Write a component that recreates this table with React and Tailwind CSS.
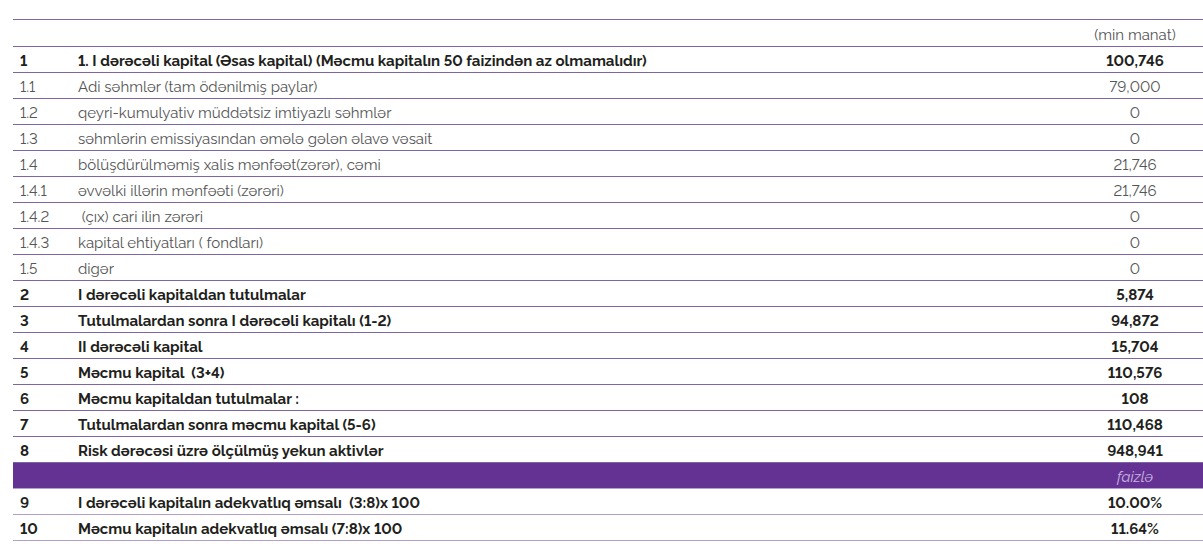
export default function App() {
  const rows = [
    { n: "1", t: "1. I dərəcəli kapital (Əsas kapital) (Məcmu kapitalın 50 faizindən az olmamalıdır)", v: "100,746", b: true },
    { n: "1.1", t: "Adi səhmlər (tam ödənilmiş paylar)", v: "79,000" },
    { n: "1.2", t: "qeyri-kumulyativ müddətsiz imtiyazlı səhmlər", v: "0" },
    { n: "1.3", t: "səhmlərin emissiyasından əmələ gələn əlavə vəsait", v: "0" },
    { n: "1.4", t: "bölüşdürülməmiş xalis mənfəət(zərər), cəmi", v: "21,746" },
    { n: "1.4.1", t: "əvvəlki illərin mənfəəti (zərəri)", v: "21,746" },
    { n: "1.4.2", t: "\u00a0(çıx) cari ilin zərəri", v: "0" },
    { n: "1.4.3", t: "kapital ehtiyatları ( fondları)", v: "0" },
    { n: "1.5", t: "digər", v: "0" },
    { n: "2", t: "I dərəcəli kapitaldan tutulmalar", v: "5,874", b: true },
    { n: "3", t: "Tutulmalardan sonra I dərəcəli kapitalı (1-2)", v: "94,872", b: true },
    { n: "4", t: "II dərəcəli kapital", v: "15,704", b: true },
    { n: "5", t: "Məcmu kapital  (3+4)", v: "110,576", b: true },
    { n: "6", t: "Məcmu kapitaldan tutulmalar :", v: "108", b: true },
    { n: "7", t: "Tutulmalardan sonra məcmu kapital (5-6)", v: "110,468", b: true },
    { n: "8", t: "Risk dərəcəsi üzrə ölçülmüş yekun aktivlər", v: "948,941", b: true },
  ];
  const tail = [
    { n: "9", t: "I dərəcəli kapitalın adekvatlıq əmsalı  (3:8)x 100", v: "10.00%", b: true },
    { n: "10", t: "Məcmu kapitalın adekvatlıq əmsalı (7:8)x 100", v: "11.64%", b: true },
  ];
  const Row = ({ r, light }) => (
    <div
      className={
        "grid grid-cols-[65px_1fr_136px] h-[26px] items-center border-b whitespace-pre " +
        (light ? "border-[#b29fcd] " : "border-[#7e66a6] ") +
        (r.b ? "font-bold text-[#231f20]" : "font-normal text-[#555555]")
      }
    >
      <div className="pl-[7px] pt-[2px]">{r.n}</div>
      <div className="pt-[2px]">{r.t}</div>
      <div className="text-center pt-[2px]">{r.v}</div>
    </div>
  );
  return (
    <div
      className="w-[1203px] h-[554px] bg-white pt-[19px] pl-[13px] text-[15px] leading-[18px] lining-nums"
      style={{ fontFamily: "Raleway, 'Noto Sans', sans-serif" }}
    >
      <div className="border-t border-[#7e66a6]">
        <div className="grid grid-cols-[65px_1fr_136px] h-[27px] items-center border-b border-[#7e66a6] text-[#555555]">
          <div></div>
          <div></div>
          <div className="text-center pt-[4px]">(min manat)</div>
        </div>
        {rows.map((r) => (
          <Row key={r.n} r={r} />
        ))}
        <div className="grid grid-cols-[65px_1fr_136px] h-[26px] items-center bg-[#643292] border-b border-[#b29fcd]">
          <div></div>
          <div></div>
          <div className="text-center italic text-[#c8b5e4] pt-[2px]">faizlə</div>
        </div>
        {tail.map((r) => (
          <Row key={r.n} r={r} light />
        ))}
      </div>
    </div>
  );
}
